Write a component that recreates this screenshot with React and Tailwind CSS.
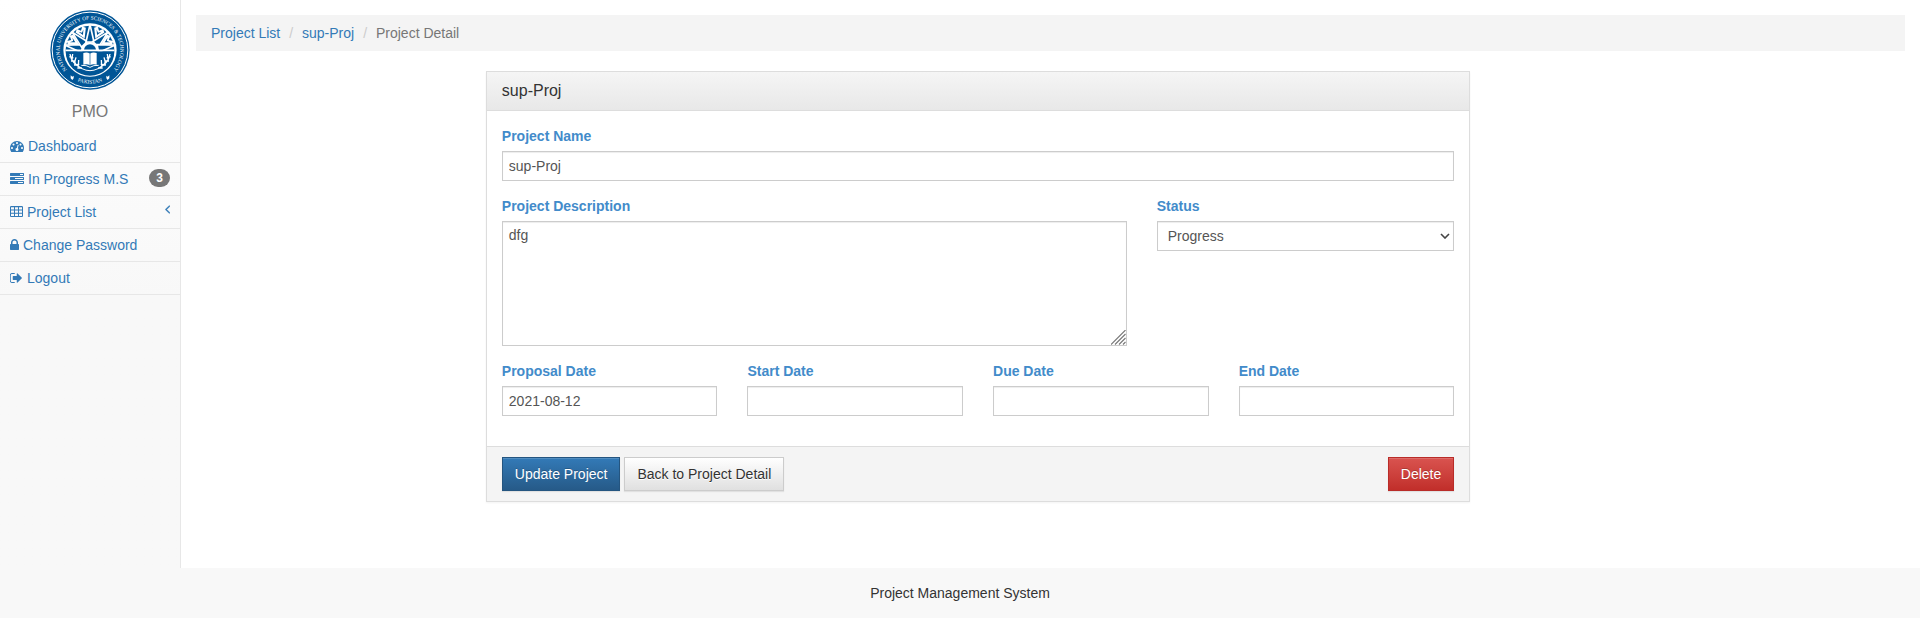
import { useId } from "react";

function Seal() {
  const spikes = [-79, -45, 0, 45, 79];
  const chevrons = [-62, -25, 25, 62];
  return (
    <svg viewBox="-120 -120 240 240" className="size-20" role="img" aria-label="University seal">
      <defs>
        <path id="seal-top" d="M-64.3 64.3A91 91 0 1 1 64.3 64.3" />
        <path id="seal-bottom" d="M-71.4 71.4A101 101 0 0 0 71.4 71.4" />
      </defs>
      <circle r="119" fill="#005596" />
      <circle r="113.5" fill="none" stroke="#fff" strokeWidth="3" />
      <g fill="#fff" fontFamily="'Liberation Serif', serif" fontSize="16" textAnchor="middle">
        <text>
          <textPath href="#seal-top" startOffset="50%">NATIONAL UNIVERSITY OF SCIENCES &amp; TECHNOLOGY</textPath>
        </text>
        <text>
          <textPath href="#seal-bottom" startOffset="50%">PAKISTAN</textPath>
        </text>
      </g>
      <g fill="#fff">
        <path d="M-58 76l5 4 4-3 0 8-4 5-5-5z" />
        <path d="M58 76l-5 4-4-3 0 8 4 5 5-5z" />
      </g>
      <circle r="80" fill="#fff" />
      <circle r="73" fill="#005596" />
      {spikes.map((a) => (
        <path key={a} transform={`rotate(${a})`} d="M-12 -24L0 -76L12 -24z" fill="#005596" stroke="#fff" strokeWidth="5" />
      ))}
      {chevrons.map((a) => (
        <path
          key={a}
          transform={`rotate(${a})`}
          d="M0 -38L-17 -66L-9 -74L0 -64L9 -74L17 -66z M0 -50L8 -64L0 -57L-8 -64z"
          fill="#fff"
          fillRule="evenodd"
        />
      ))}
      <path d="M-25 1A25 25 0 0 1 25 1z" fill="#fff" />
      <path d="M-18 1A18 18 0 0 1 18 1z" fill="#005596" />
      <path d="M-73 4H73A73 73 0 0 1 -73 4z" fill="#005596" />
      <path d="M-73 1H73" stroke="#fff" strokeWidth="5" />
      <path d="M-20 9Q-9 5 0 11Q9 5 20 9V44Q9 40 0 46Q-9 40 -20 44z" fill="#fff" />
      <path d="M0 11V45" fill="none" stroke="#005596" strokeWidth="2" />
      <path d="M-26 46Q-10 45 0 52Q10 45 26 46" fill="none" stroke="#fff" strokeWidth="3" />
      <g fill="none" stroke="#fff" strokeWidth="4">
        <path d="M-60 12Q-56 40 -24 56M-62 20l12 4M-52 12l-2 14M-57 33l14 0M-42 22l-4 14l4 8M-48 45l16 -2M-34 30l-1 18M-38 54l14 0" />
        <path d="M60 12Q56 40 24 56M62 20l-12 4M52 12l2 14M57 33l-14 0M42 22l4 14l-4 8M48 45l-16 -2M34 30l1 18M38 54l-14 0" />
        <path d="M-24 56Q0 68 24 56" strokeWidth="3" />
      </g>
    </svg>
  );
}

const icons = {
  dashboard: {
    box: "0 0 1792 1792",
    size: "w-[14px]",
    d: "M384 1152q0-53-37.5-90.5t-90.5-37.5-90.5 37.5-37.5 90.5 37.5 90.5 90.5 37.5 90.5-37.5 37.5-90.5zm192-448q0-53-37.5-90.5t-90.5-37.5-90.5 37.5-37.5 90.5 37.5 90.5 90.5 37.5 90.5-37.5 37.5-90.5zm428 481l101-382q6-26-7.5-48.5t-38.5-29.5-48 6.5-30 39.5l-101 382q-60 5-107 43.5t-63 98.5q-20 77 20 146t117 89 146-20 89-117q16-60-6-117t-72-91zm660-33q0-53-37.5-90.5t-90.5-37.5-90.5 37.5-37.5 90.5 37.5 90.5 90.5 37.5 90.5-37.5 37.5-90.5zm-640-640q0-53-37.5-90.5t-90.5-37.5-90.5 37.5-37.5 90.5 37.5 90.5 90.5 37.5 90.5-37.5 37.5-90.5zm448 192q0-53-37.5-90.5t-90.5-37.5-90.5 37.5-37.5 90.5 37.5 90.5 90.5 37.5 90.5-37.5 37.5-90.5zm320 448q0 261-141 483-19 29-54 29h-1402q-35 0-54-29-141-221-141-483 0-182 71-348t191-286 286-191 348-71 348 71 286 191 191 286 71 348z",
  },
  tasks: {
    box: "0 0 1792 1792",
    size: "w-[14px]",
    d: "M1024 1408h640v-128h-640v128zm-384-512h1024v-128h-1024v128zm640-512h384v-128h-384v128zm512 832v256q0 26-19 45t-45 19h-1664q-26 0-45-19t-19-45v-256q0-26 19-45t45-19h1664q26 0 45 19t19 45zm0-512v256q0 26-19 45t-45 19h-1664q-26 0-45-19t-19-45v-256q0-26 19-45t45-19h1664q26 0 45 19t19 45zm0-512v256q0 26-19 45t-45 19h-1664q-26 0-45-19t-19-45v-256q0-26 19-45t45-19h1664q26 0 45 19t19 45z",
  },
  table: {
    box: "0 0 1664 1792",
    size: "w-[13px]",
    d: "M160 128h1344q66 0 113 47t47 113v1088q0 66-47 113t-113 47h-1344q-66 0-113-47t-47-113v-1088q0-66 47-113t113-47zM128 288v288h384v-288zM640 288v288h384v-288zM1152 288v288h384v-288zM128 704v288h384v-288zM640 704v288h384v-288zM1152 704v288h384v-288zM128 1120v288h384v-288zM640 1120v288h384v-288zM1152 1120v288h384v-288z",
  },
  lock: {
    box: "320 0 1152 1792",
    size: "w-[9px]",
    d: "M640 768h512v-192q0-106-75-181t-181-75-181 75-75 181v192zm832 96v576q0 40-28 68t-68 28h-960q-40 0-68-28t-28-68v-576q0-40 28-68t68-28h32v-192q0-184 132-316t316-132 316 132 132 316v192h32q40 0 68 28t28 68z",
  },
  logout: {
    box: "96 0 1664 1792",
    size: "w-[13px]",
    d: "M704 1440q0 4 1 20t.5 26.5-3 23.5-10 19.5-20.5 6.5h-320q-119 0-203.5-84.5t-84.5-203.5v-704q0-119 84.5-203.5t203.5-84.5h320q13 0 22.5 9.5t9.5 22.5q0 4 1 20t.5 26.5-3 23.5-10 19.5-20.5 6.5h-320q-66 0-113 47t-47 113v704q0 66 47 113t113 47h312l11.5 1 11.5 3 8 5.5 7 9 2 13.5zm928-544q0 26-19 45l-544 544q-19 19-45 19t-45-19-19-45v-288h-448q-26 0-45-19t-19-45v-384q0-26 19-45t45-19h448v-288q0-26 19-45t45-19 45 19l544 544q19 19 19 45z",
  },
  angle: {
    box: "576 0 640 1792",
    size: "w-[5px]",
    d: "M1203 544q0 13-10 23l-393 393 393 393q10 10 10 23t-10 23l-50 50q-10 10-23 10t-23-10l-466-466q-10-10-10-23t10-23l466-466q10-10 23-10t23 10l50 50q10 10 10 23z",
  },
};

function Icon({ name }) {
  const icon = icons[name];
  return (
    <svg
      viewBox={icon.box}
      className={`h-[14px] shrink-0 ${icon.size}`}
      fill="currentColor"
      stroke="currentColor"
      strokeWidth={name === "angle" ? 60 : 0}
      fillRule="evenodd"
      aria-hidden="true"
    >
      <path d={icon.d} />
    </svg>
  );
}

function NavItem({ icon, label, children }) {
  return (
    <li className="border-b border-[#e7e7e7]">
      <a href="#" className="flex items-start px-2.5 py-1.5 text-[#337ab7] hover:bg-[#eee]">
        <span className="flex flex-1 items-center gap-1">
          <Icon name={icon} />
          {label}
        </span>
        {children}
      </a>
    </li>
  );
}

const control =
  "block w-full border border-[#ccc] bg-white text-[#555] shadow-[inset_0_1px_1px_rgba(0,0,0,0.075)] outline-none focus:border-[#66afe9]";

function Field({ label, className, render }) {
  const id = useId();
  return (
    <div className={className}>
      <label htmlFor={id} className="mb-[5px] block font-bold text-[#428bca]">
        {label}
      </label>
      {render(id)}
    </div>
  );
}

function TextField({ label, className, value = "" }) {
  return (
    <Field
      label={label}
      className={className}
      render={(id) => <input id={id} type="text" defaultValue={value} className={`${control} h-[30px] px-1.5`} />}
    />
  );
}

const button = "border px-3 py-1.5";

function Separator() {
  return <span className="px-[5px] text-[#ccc]">{"/\u00a0"}</span>;
}

export default function App() {
  return (
    <div className="flex min-h-screen flex-col bg-[#f8f8f8] font-['Liberation_Sans',Arial,sans-serif] text-[14px] leading-5 text-[#333]">
      <div className="flex flex-1">
        <aside className="w-[180px] shrink-0 bg-linear-to-b from-white to-[#f8f8f8] to-[300px]">
          <div className="flex flex-col items-center pt-2.5 pb-2">
            <Seal />
            <p className="mt-3 text-[16px] leading-5 text-[#777]">PMO</p>
          </div>
          <nav>
            <ul>
              <NavItem icon="dashboard" label="Dashboard" />
              <NavItem icon="tasks" label="In Progress M.S">
                <span className="rounded-[10px] bg-[#777] px-[7px] py-[3px] text-[12px] leading-3 font-bold text-white">3</span>
              </NavItem>
              <NavItem icon="table" label="Project List">
                <Icon name="angle" />
              </NavItem>
              <NavItem icon="lock" label="Change Password" />
              <NavItem icon="logout" label="Logout" />
            </ul>
          </nav>
        </aside>

        <main className="min-w-0 flex-1 border-l border-[#e7e7e7] bg-white pt-[15px]">
          <nav aria-label="Breadcrumb" className="mx-[15px] mb-5 bg-[#f4f4f4] px-[15px] py-2">
            <ol className="flex gap-1">
              <li>
                <a href="#" className="text-[#337ab7]">Project List</a>
              </li>
              <li>
                <Separator />
                <a href="#" className="text-[#337ab7]">sup-Proj</a>
              </li>
              <li className="text-[#777]">
                <Separator />
                Project Detail
              </li>
            </ol>
          </nav>

          <div className="ml-[calc(100%/6)] w-7/12 px-[15px]">
            <form className="border border-[#ddd] shadow-[0_1px_2px_rgba(0,0,0,0.05)]" onSubmit={(e) => e.preventDefault()}>
              <h3 className="border-b border-[#ddd] bg-linear-to-b from-[#f5f5f5] to-[#e8e8e8] px-[15px] py-[9px] text-[16px]">
                sup-Proj
              </h3>
              <div className="grid grid-cols-12 gap-x-[30px] gap-y-[15px] px-[15px] pt-[15px] pb-[30px]">
                <TextField label="Project Name" value="sup-Proj" className="col-span-12" />
                <Field
                  label="Project Description"
                  className="col-span-8"
                  render={(id) => (
                    <div className="relative">
                      <textarea id={id} defaultValue="dfg" className={`${control} h-[125px] resize-none px-1.5 py-[3px]`} />
                      <svg
                        viewBox="0 0 15 15"
                        className="pointer-events-none absolute right-px bottom-px size-[15px]"
                        fill="none"
                        stroke="#777"
                        strokeWidth="1.1"
                        aria-hidden="true"
                      >
                        <path d="M0 14.5L14.5 0M4 14.5L14.5 4M8 14.5L14.5 8M12 14.5L14.5 12" />
                      </svg>
                    </div>
                  )}
                />
                <Field
                  label="Status"
                  className="col-span-4"
                  render={(id) => (
                    <div className="relative">
                      <select id={id} defaultValue="Progress" className={`${control} h-[30px] appearance-none px-2.5`}>
                        <option>Progress</option>
                        <option>Completed</option>
                      </select>
                      <svg
                        viewBox="0 0 10 6"
                        className="pointer-events-none absolute top-3 right-1 h-1.5 w-2.5"
                        fill="none"
                        stroke="#444"
                        strokeWidth="1.6"
                        aria-hidden="true"
                      >
                        <path d="M1 1L5 5L9 1" />
                      </svg>
                    </div>
                  )}
                />
                <TextField label="Proposal Date" value="2021-08-12" className="col-span-3" />
                <TextField label="Start Date" className="col-span-3" />
                <TextField label="Due Date" className="col-span-3" />
                <TextField label="End Date" className="col-span-3" />
              </div>
              <div className="flex gap-1 border-t border-[#ddd] bg-[#f4f4f4] px-[15px] py-2.5">
                <button
                  type="submit"
                  className={`${button} border-[#245580] bg-linear-to-b from-[#337ab7] to-[#265a88] text-white shadow-[inset_0_1px_0_rgba(255,255,255,0.15),0_1px_1px_rgba(0,0,0,0.075)] [text-shadow:0_-1px_0_rgba(0,0,0,0.2)]`}
                >
                  Update Project
                </button>
                <button
                  type="button"
                  className={`${button} border-[#ccc] bg-linear-to-b from-white to-[#e0e0e0] shadow-[inset_0_1px_0_rgba(255,255,255,0.15),0_1px_1px_rgba(0,0,0,0.075)] [text-shadow:0_1px_0_#fff]`}
                >
                  Back to Project Detail
                </button>
                <button
                  type="button"
                  className={`${button} ml-auto border-[#b92c28] bg-linear-to-b from-[#d9534f] to-[#c12e2a] text-white shadow-[inset_0_1px_0_rgba(255,255,255,0.15),0_1px_1px_rgba(0,0,0,0.075)] [text-shadow:0_-1px_0_rgba(0,0,0,0.2)]`}
                >
                  Delete
                </button>
              </div>
            </form>
          </div>
        </main>
      </div>
      <footer className="py-[15px] text-center">Project Management System</footer>
    </div>
  );
}
